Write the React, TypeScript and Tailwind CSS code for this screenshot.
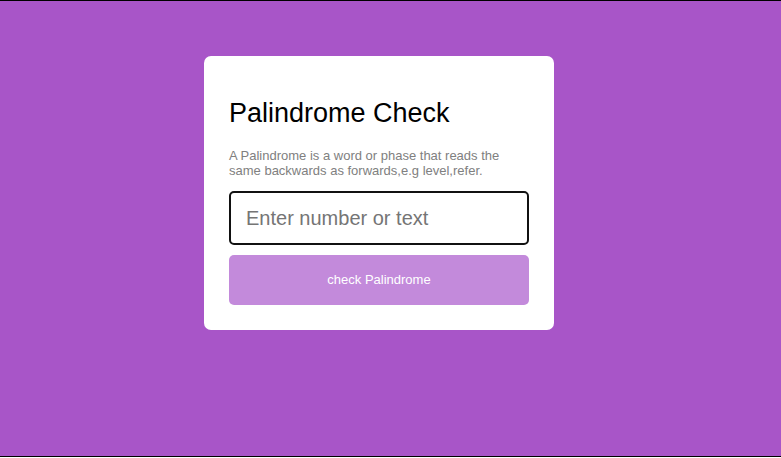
import React, { useState } from "react";

function PalindromeCard() {
  const [value, setValue] = useState<string>("");

  return (
    <div className="w-[350px] rounded-[7px] bg-white px-[25px] pt-[42px] pb-[25px]">
      <h1 className="text-[27px] leading-[31px] text-black">Palindrome Check</h1>
      <p className="mt-[19px] text-[13px] leading-[15px] text-[#808080]">
        A Palindrome is a word or phase that reads the same backwards as
        forwards,e.g level,refer.
      </p>
      <input
        type="text"
        autoFocus
        value={value}
        onChange={(e) => setValue(e.target.value)}
        placeholder="Enter number or text"
        className="mt-[13px] block h-[54px] w-full rounded-[5px] border-2 border-[#111111] px-[15px] text-[20px] text-black outline-none placeholder:text-[#757575]"
      />
      <button className="mt-[10px] block h-[50px] w-full rounded-[5px] bg-[#c38adb] text-[13px] text-white">
        check Palindrome
      </button>
    </div>
  );
}

export default function App() {
  return (
    <div className="h-[457px] border-y border-black bg-[#a855c8] pt-[55px] pl-[204px] font-['Liberation_Sans',Arial,sans-serif]">
      <PalindromeCard />
    </div>
  );
}
